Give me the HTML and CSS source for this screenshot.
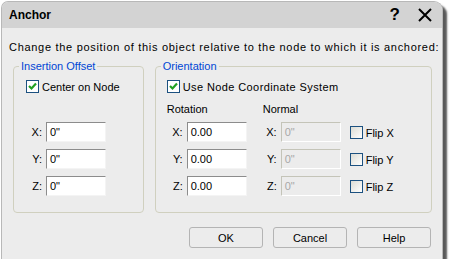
FILE: index.html
```html
<!DOCTYPE html>
<html lang="en">
<head>
    <meta charset="utf-8">
    <title>Anchor</title>
    <link rel="stylesheet" href="styles.css">
</head>
<body>
    <div class="window">
        <div class="titlebar">
            <span class="title">Anchor</span>
            <span class="help">?</span>
            <svg class="close" width="14" height="14" viewBox="0 0 14 14">
                <path d="M1 1 L13 13 M13 1 L1 13" stroke="#000" stroke-width="2"/>
            </svg>
        </div>
        <div class="content">
            <p class="intro">Change the position of this object relative to the node to which it is anchored:</p>
            <div class="groups">
                <fieldset class="group group-offset">
                    <legend>Insertion Offset</legend>
                    <label class="check">
                        <span class="box checked">
                            <svg width="11" height="11" viewBox="0 0 11 11"><path d="M2 5 L4.5 7.5 L9 2.5" stroke="#21a121" stroke-width="2.2" fill="none"/></svg>
                        </span>
                        Center on Node
                    </label>
                    <div class="fields">
                        <div class="row"><span class="lbl">X:</span><span class="input">0"</span></div>
                        <div class="row"><span class="lbl">Y:</span><span class="input">0"</span></div>
                        <div class="row"><span class="lbl">Z:</span><span class="input">0"</span></div>
                    </div>
                </fieldset>
                <fieldset class="group group-orient">
                    <legend>Orientation</legend>
                    <label class="check">
                        <span class="box checked">
                            <svg width="11" height="11" viewBox="0 0 11 11"><path d="M2 5 L4.5 7.5 L9 2.5" stroke="#21a121" stroke-width="2.2" fill="none"/></svg>
                        </span>
                        <span class="wide-text">Use Node Coordinate System</span>
                    </label>
                    <div class="columns">
                        <div class="col col-rot">
                            <div class="head">Rotation</div>
                            <div class="row"><span class="lbl wide">X:</span><span class="input">0.00</span></div>
                            <div class="row"><span class="lbl wide">Y:</span><span class="input">0.00</span></div>
                            <div class="row"><span class="lbl wide">Z:</span><span class="input">0.00</span></div>
                        </div>
                        <div class="col col-normal">
                            <div class="head">Normal</div>
                            <div class="row"><span class="lbl">X:</span><span class="input disabled">0"</span></div>
                            <div class="row"><span class="lbl">Y:</span><span class="input disabled">0"</span></div>
                            <div class="row"><span class="lbl">Z:</span><span class="input disabled">0"</span></div>
                        </div>
                        <div class="col col-flip">
                            <label class="check flip"><span class="box"></span>Flip X</label>
                            <label class="check flip"><span class="box"></span>Flip Y</label>
                            <label class="check flip"><span class="box"></span>Flip Z</label>
                        </div>
                    </div>
                </fieldset>
            </div>
            <div class="buttons">
                <button class="btn">OK</button>
                <button class="btn">Cancel</button>
                <button class="btn">Help</button>
            </div>
        </div>
    </div>
</body>
</html>
```
FILE: styles.css
```css
* {
    box-sizing: border-box;
}
body {
    margin: 0;
    background: #fff;
    font-family: "Liberation Sans", Arial, sans-serif;
    font-size: 11px;
    color: #000;
}
.window {
    width: 442px;
    height: 258px;
    margin: 1px 0 0 1px;
    background: #ececec;
    border: 1px solid #b8b8b8;
    border-bottom: none;
    border-radius: 7px 9px 0 0;
    box-shadow: 4px 4px 2px rgba(0, 0, 0, 0.65);
    overflow: hidden;
}
.titlebar {
    height: 26px;
    background: #d3d3d3;
    display: flex;
    align-items: center;
    padding: 0 10px 0 7px;
}
.title {
    font-weight: bold;
    font-size: 12px;
    flex: 1;
}
.help {
    font-weight: bold;
    font-size: 17px;
    margin-right: 18px;
}
.content {
    padding: 12px 10px 0 11px;
}
.intro {
    margin: 0 0 0 -4px;
    line-height: 14px;
    letter-spacing: 0.7px;
    white-space: nowrap;
}
.groups {
    display: flex;
    gap: 11px;
    margin-top: 6px;
}
.group {
    margin: 0;
    border: 1px solid #d0d0bf;
    border-radius: 4px;
    padding: 0 0 16px 12px;
}
.group legend {
    color: #0046d5;
    padding: 0 2px;
    margin-left: -7px;
    line-height: 13px;
}
.group-offset {
    width: 131px;
}
.group-orient {
    width: 278px;
    padding-left: 11px;
}
.group-orient legend {
    margin-left: -6px;
}
.check {
    display: flex;
    align-items: center;
    gap: 3px;
    height: 13px;
    margin-top: 7px;
    white-space: nowrap;
}
.wide-text {
    letter-spacing: 0.4px;
}
.box {
    width: 13px;
    height: 13px;
    border: 1px solid #1c5180;
    background: linear-gradient(135deg, #dcdcd4, #fff);
    display: flex;
    align-items: center;
    justify-content: center;
}
.box.checked {
    background: #fff;
}
.fields {
    margin-top: 29px;
    display: flex;
    flex-direction: column;
    gap: 7px;
}
.row {
    display: flex;
    align-items: center;
}
.lbl {
    width: 14px;
    text-align: right;
    margin-right: 4px;
}
.lbl.wide {
    width: 16px;
}
.fields .lbl {
    width: 16px;
}
.input {
    width: 60px;
    height: 20px;
    background: #fff;
    border: 1px solid;
    border-color: #8c8c8c #f4f4f4 #f4f4f4 #8c8c8c;
    padding: 2px 3px;
    line-height: 14px;
}
.input.disabled {
    background: #ececec;
    color: #a8a8a8;
    border-color: #c4c4b8 #fff #fff #c4c4b8;
}
.columns {
    display: flex;
    margin-top: 10px;
}
.col {
    display: flex;
    flex-direction: column;
    gap: 7px;
}
.col-normal {
    margin-left: 16px;
}
.col-flip {
    margin-left: 9px;
    padding-top: 23px;
    gap: 14px;
}
.head {
    height: 13px;
    line-height: 13px;
    margin-bottom: -1px;
}
.check.flip {
    margin-top: 0;
}
.buttons {
    display: flex;
    justify-content: flex-end;
    gap: 10px;
    margin-top: 14px;
    padding-right: 1px;
}
.btn {
    width: 74px;
    height: 21px;
    font-family: "Liberation Sans", Arial, sans-serif;
    font-size: 11px;
    background: #ececec;
    border: 1px solid #b4b4b4;
    border-radius: 3px;
    padding: 0;
}
```
